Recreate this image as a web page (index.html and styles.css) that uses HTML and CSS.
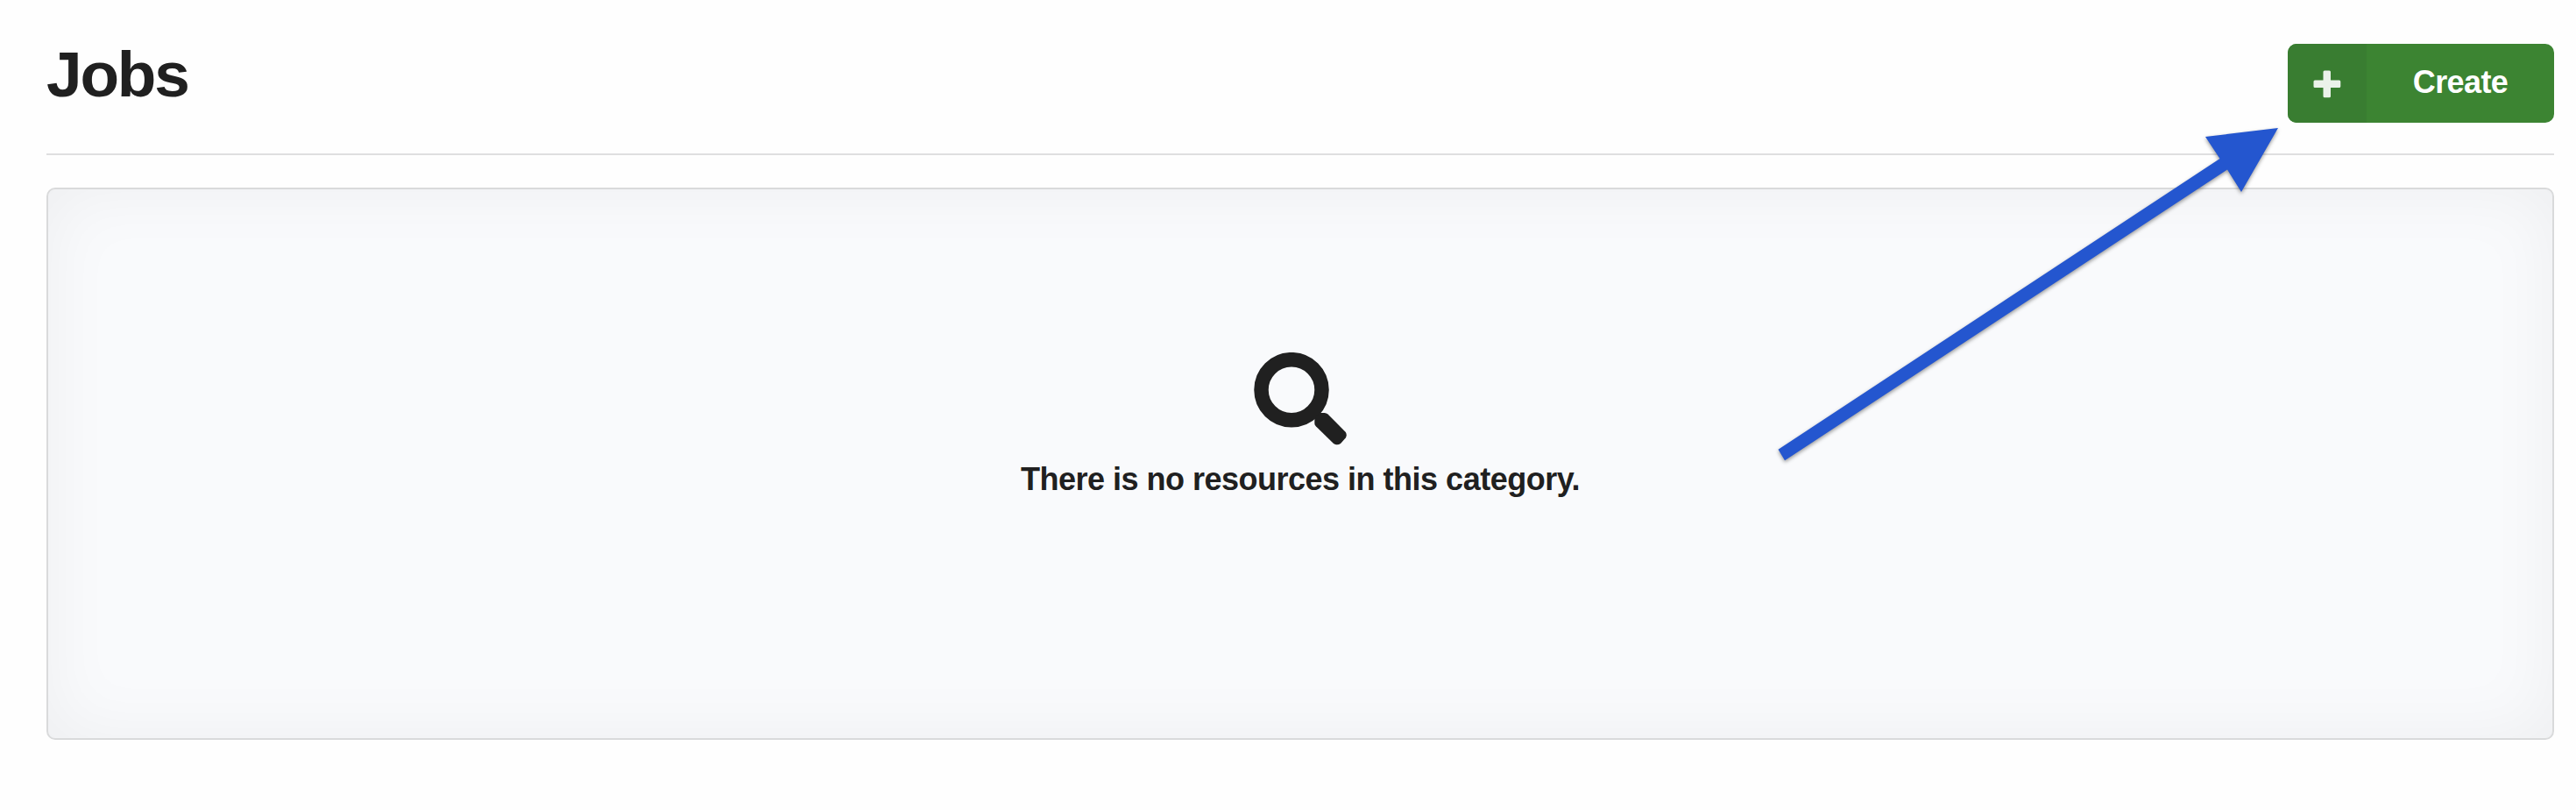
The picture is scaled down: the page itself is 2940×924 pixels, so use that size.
FILE: index.html
```html
<!DOCTYPE html>
<html lang="en">
<head>
<meta charset="utf-8">
<title>Jobs</title>
<link rel="stylesheet" href="styles.css">
</head>
<body>
<main class="page">
  <header class="header">
    <h1 class="title">Jobs</h1>
    <button class="create" type="button">
      <span class="create-icon">
        <svg width="32" height="32" viewBox="0 0 32 32"><path d="M13 .5h5.500q1.500 0 1.500 1.500V11.500h9.800q1.500 0 1.500 1.500v5.500q0 1.500-1.500 1.500H20v9.800q0 1.500-1.500 1.500H13q-1.500 0-1.500-1.500V20H2Q.5 20 .5 18.500V13q0-1.500 1.500-1.500h9.500V2Q11.500.5 13 .5Z" fill="#ebf2ea"/></svg>
      </span>
      <span class="create-label">Create</span>
    </button>
  </header>
  <section class="empty">
    <svg class="search" width="106" height="106" viewBox="1431 402 106 106">
      <circle cx="1474" cy="444.700" r="34.500" fill="none" stroke="#202020" stroke-width="16.500"/>
      <path d="M1500.300 477v6q0 1.800 1.500 3.300L1522 506q4 2.600 8 0l5.800-6.500q1.800-3.500 0-6.500L1515.500 472.500q-1.500-1.500-4-1.500h-5z" fill="#202020"/>
    </svg>
    <p class="message">There is no resources in this category.</p>
  </section>
</main>
<svg class="arrow" width="590" height="400" viewBox="2020 140 590 400">
  <path d="M2600 146 2558 219 2542 193.500 2037 525.300 2029.500 512.700 2533.500 181 2517 156Z" fill="#2456cf"/>
</svg>
</body>
</html>
```
FILE: styles.css
```css
* {
  box-sizing: border-box;
}

body {
  margin: 0;
  background: #fefefe;
  color: #202020;
  font-family: "Liberation Sans", Arial, sans-serif;
  font-weight: 700;
}

.page {
  position: relative;
  height: 924px;
  padding: 50px 25px 80px 53px;
}

.header {
  display: flex;
  align-items: flex-start;
  justify-content: space-between;
  height: 127px;
  border-bottom: 2px solid #dfdfe0;
}

.title {
  margin: 0;
  font-size: 73px;
  line-height: 69px;
  letter-spacing: -2.2px;
}

.create {
  display: flex;
  width: 304px;
  height: 90px;
  padding: 0;
  overflow: hidden;
  border: 0;
  border-radius: 10px;
  background: #3c8432;
  color: #fff;
  font: inherit;
}

.create-icon {
  display: flex;
  align-items: center;
  justify-content: center;
  width: 90px;
  height: 90px;
  padding-top: 2px;
  background: #397d31;
}

.create-label {
  flex: 1;
  font-size: 36px;
  line-height: 87px;
  letter-spacing: -0.6px;
  text-align: center;
}

.empty {
  display: flex;
  flex-direction: column;
  align-items: center;
  height: 630px;
  margin-top: 37px;
  padding-top: 186px;
  border: 2px solid #d9dadb;
  border-radius: 10px;
  background: #f9fafc;
  box-shadow: inset 0 0 80px rgba(0, 0, 0, 0.05);
}

.search {
  display: block;
}

.message {
  margin: 18px 0 0;
  font-size: 36px;
  line-height: 42px;
  letter-spacing: -0.5px;
  white-space: nowrap;
}

.arrow {
  position: absolute;
  top: 140px;
  left: 2020px;
  filter: drop-shadow(0 2px 2px rgba(0, 0, 0, 0.4));
}
```
